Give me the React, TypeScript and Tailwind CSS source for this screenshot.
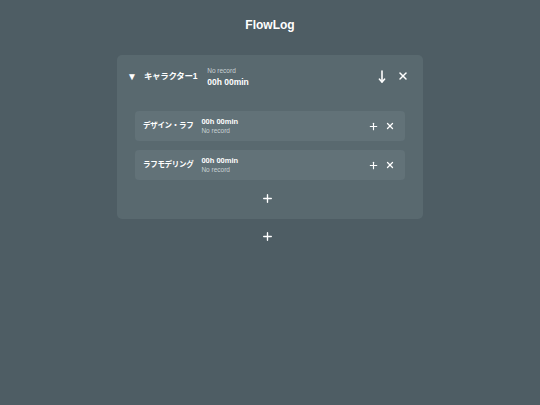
import { Plus, X } from "lucide-react";

const tasks = [
    { name: "デザイン・ラフ", time: "00h 00min" },
    { name: "ラフモデリング", time: "00h 00min" },
];

function DownArrow() {
    return (
        <svg width="8" height="13" viewBox="0 0 8 13" fill="none" stroke="currentColor" strokeWidth="1.6" strokeLinecap="round" strokeLinejoin="round">
            <path d="M4 1v11" />
            <path d="M1.5 9.2L4 12l2.5-2.8" />
        </svg>
    );
}

function TaskRow({ name, time }: { name: string; time: string }) {
    return (
        <div className="flex items-center h-[30px] rounded-[4px] bg-[#627278] pl-[8px] pr-[10px]">
            <div className="text-[7.5px] font-bold text-white mr-[8px] tracking-[-0.3px]">{name}</div>
            <div className="flex flex-col leading-none">
                <div className="text-[7.5px] font-bold text-white">{time}</div>
                <div className="text-[6.5px] text-[#c9d1d4] mt-[2px]">No record</div>
            </div>
            <div className="ml-auto flex items-center gap-[6px] text-white">
                <Plus size={11} strokeWidth={2.5} />
                <X size={10} strokeWidth={3} />
            </div>
        </div>
    );
}

export default function App() {
    return (
        <div
            className="w-[540px] h-[405px] bg-[#4e5d64] flex flex-col items-center"
            style={{ fontFamily: '"Liberation Sans", "Noto Sans CJK JP", sans-serif' }}
        >
            <div className="mt-[16px] text-[12px] font-bold text-white">FlowLog</div>

            <div className="mt-[21px] w-[306px] rounded-[5px] bg-[#59696f] pb-[14px]">
                <div className="flex items-center h-[42px] pl-[10px] pr-[14px]">
                    <div className="text-[10px] text-white">▼</div>
                    <div className="ml-[7px] text-[8.5px] font-bold text-white tracking-[-0.3px]">キャラクター1</div>
                    <div className="ml-[10px] flex flex-col leading-none mt-[2px]">
                        <div className="text-[6.5px] text-[#c9d1d4]">No record</div>
                        <div className="text-[8.5px] font-bold text-white mt-[3px]">00h 00min</div>
                    </div>
                    <div className="ml-auto flex items-center gap-[11px] text-white">
                        <DownArrow />
                        <X size={12} strokeWidth={3} />
                    </div>
                </div>

                <div className="mt-[14px] px-[18px] flex flex-col gap-[9px]">
                    {tasks.map((t) => (
                        <TaskRow key={t.name} name={t.name} time={t.time} />
                    ))}
                </div>

                <div className="mt-[12px] flex justify-center text-white pr-[6px]">
                    <Plus size={13} strokeWidth={2.5} />
                </div>
            </div>

            <div className="mt-[11px] flex justify-center text-white pr-[6px]">
                <Plus size={13} strokeWidth={2.5} />
            </div>
        </div>
    );
}
